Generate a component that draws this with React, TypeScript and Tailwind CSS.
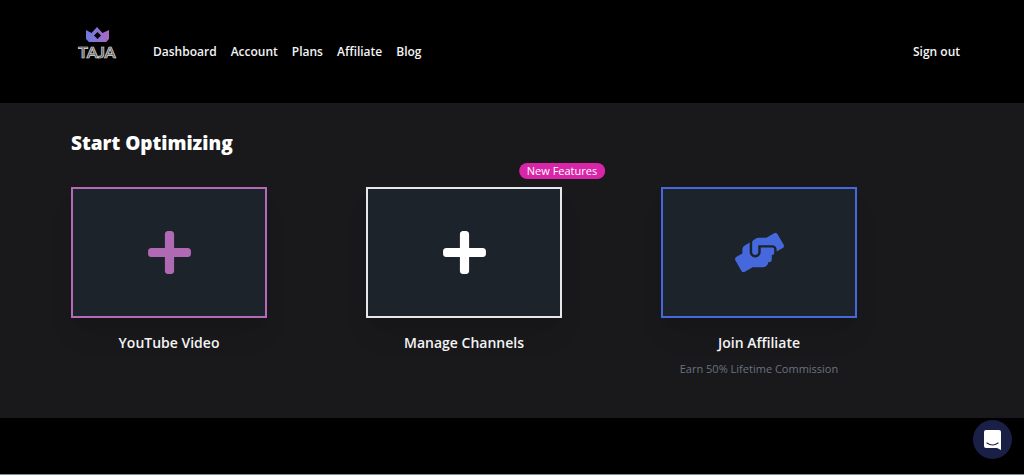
import type { ReactNode } from 'react';
import { FaHandsHelping, FaPlus } from 'react-icons/fa';

const navLinks = ['Dashboard', 'Account', 'Plans', 'Affiliate', 'Blog'];

function Logo() {
  return (
    <a href="#home" aria-label="Taja home" className="block">
      <svg width="40" height="34" viewBox="0 0 40 34">
        <defs>
          <linearGradient id="crown" x1="0" y1="0" x2="1" y2="0">
            <stop offset="0" stopColor="#6a7be0" />
            <stop offset="1" stopColor="#a868c4" />
          </linearGradient>
        </defs>
        <path
          fill="url(#crown)"
          fillRule="evenodd"
          d="M9 4l5.500 3L20 1l5.500 6L32 4v9l-3 3H12l-3-3zM20.500 6l-3.500 3.500 3.500 3.500 3.500-3.500z"
        />
        <text
          x="20"
          y="32"
          textAnchor="middle"
          fontFamily="Lato, sans-serif"
          fontSize="16"
          fontWeight="700"
          fill="#555"
          stroke="#e0e0e0"
          strokeWidth="0.7"
        >
          TAJA
        </text>
      </svg>
    </a>
  );
}

type CardProps = {
  title: string;
  note?: string;
  badge?: string;
  color: string;
  children: ReactNode;
};

function Card({ title, note, badge, color, children }: CardProps) {
  return (
    <div className="relative w-[196px] text-center">
      <button
        type="button"
        aria-label={title}
        className={`flex h-[131px] w-full cursor-pointer items-center justify-center border-2 bg-[#1d232a] shadow-xl ${color}`}
      >
        {children}
      </button>
      {badge && (
        <span className="absolute -top-6 right-0 translate-x-1/2 rounded-full bg-[#d926a9] px-2 text-[11px] leading-4 whitespace-nowrap text-white">
          {badge}
        </span>
      )}
      <h2 className="mt-4 text-sm leading-[18px] font-semibold text-gray-100">{title}</h2>
      {note && <p className="mt-2 text-[11px] leading-[18px] text-gray-500">{note}</p>}
    </div>
  );
}

export default function App() {
  return (
    <div className="min-h-screen border-b border-[#78909a] bg-black font-['Open_Sans','Noto_Sans',sans-serif] text-white">
      <header className="flex h-[103px] items-center pr-16 pl-[77px]">
        <div className="-mt-[18px]">
          <Logo />
        </div>
        <nav className="ml-9 flex flex-1 items-center gap-3.5 text-xs leading-5 font-semibold text-gray-100">
          {navLinks.map((link) => (
            <a key={link} href={`#${link.toLowerCase()}`}>
              {link}
            </a>
          ))}
          <a href="#sign-out" className="ml-auto">
            Sign out
          </a>
        </nav>
      </header>

      <main className="bg-[#19191b] px-[71px] pt-7 pb-10">
        <h1 className="text-[19px] leading-6 font-extrabold">Start Optimizing</h1>
        <div className="mt-8 flex flex-wrap gap-x-[99px] gap-y-8">
          <Card title="YouTube Video" color="border-[#b569b7] text-[#b06ab3]">
            <FaPlus size={49} />
          </Card>
          <Card title="Manage Channels" badge="New Features" color="border-gray-200 text-white">
            <FaPlus size={49} />
          </Card>
          <Card
            title="Join Affiliate"
            note="Earn 50% Lifetime Commission"
            color="border-[#4568dc] text-[#4568dc]"
          >
            <FaHandsHelping size={49} />
          </Card>
        </div>
      </main>

      <button
        type="button"
        aria-label="Open chat"
        className="fixed right-3 bottom-4 flex size-[39px] cursor-pointer items-center justify-center rounded-full bg-[#191f45]"
      >
        <svg width="18" height="20" viewBox="0 0 18 20">
          <path fill="#fff" d="M2 0h13a2 2 0 0 1 2 2v18l-4-2H2a2 2 0 0 1-2-2V2a2 2 0 0 1 2-2z" />
          <path
            d="M3 13q5.500 4 11 0"
            fill="none"
            stroke="#191f45"
            strokeWidth="1.200"
            strokeLinecap="round"
          />
        </svg>
      </button>
    </div>
  );
}
